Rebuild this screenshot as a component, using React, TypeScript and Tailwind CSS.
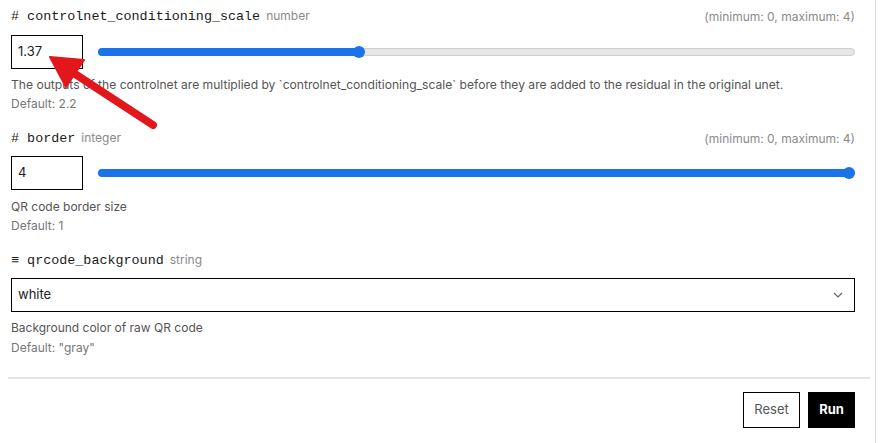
import React from "react";

const mono = { fontFamily: '"Liberation Mono", "DejaVu Sans Mono", monospace' };

function Slider({ pct }: { pct: number }) {
  return (
    <div className="relative flex-1 h-[12px] flex items-center">
      <div className="absolute left-0 right-0 h-[8px] rounded-full bg-[#e6e6e6] border border-[#cfcfcf]" />
      <div className="absolute left-[6px] right-[6px] top-0 bottom-0">
        <div className="absolute -left-[6px] top-[2px] h-[8px] rounded-full bg-[#1a73e8]" style={{ width: `calc(${pct}% + 6px)` }} />
        <div
          className="absolute top-0 w-[12px] h-[12px] rounded-full bg-[#1a73e8] -translate-x-1/2"
          style={{ left: `${pct}%` }}
        />
      </div>
    </div>
  );
}

function Label({ icon, name, type, range }: { icon: string; name: string; type: string; range?: string }) {
  return (
    <div className="flex items-center justify-between h-[20px]">
      <div className="flex items-baseline gap-[6px]">
        <span className="text-[13.4px] text-[#1a1a1a]" style={mono}>
          {icon} {name}
        </span>
        <span className="text-[12px] text-[#8a8a8a]">{type}</span>
      </div>
      {range && <span className="text-[12px] text-[#8a8a8a]">{range}</span>}
    </div>
  );
}

export default function App() {
  return (
    <div className="relative w-[884px] h-[443px] bg-white overflow-hidden" style={{ fontFamily: 'Inter, Roboto, "Liberation Sans", sans-serif' }}>
      <div className="w-[876px] h-full border-r border-[#dcdcdc] pl-[11px] pr-[20px] pt-[7px]">
        {/* field 1 */}
        <Label icon="#" name="controlnet_conditioning_scale" type="number" range="(minimum: 0, maximum: 4)" />
        <div className="flex items-center gap-[15px] mt-[8px]">
          <div className="w-[72px] h-[34px] border border-black flex items-center px-[6px] text-[13px] text-[#222]">1.37</div>
          <Slider pct={34.25} />
        </div>
        <div className="mt-[7px] text-[12.1px] leading-[18px] text-[#555]">
          The outputs of the controlnet are multiplied by `controlnet_conditioning_scale` before they are added to the residual in the original unet.
        </div>
        <div className="mt-[1px] text-[12px] leading-[18px] text-[#777]">Default: 2.2</div>

        {/* field 2 */}
        <div className="mt-[16px]">
          <Label icon="#" name="border" type="integer" range="(minimum: 0, maximum: 4)" />
        </div>
        <div className="flex items-center gap-[15px] mt-[7px]">
          <div className="w-[72px] h-[34px] border border-black flex items-center px-[6px] text-[13px] text-[#222]">4</div>
          <Slider pct={100} />
        </div>
        <div className="mt-[8px] text-[12px] leading-[18px] text-[#555]">QR code border size</div>
        <div className="mt-[1px] text-[12px] leading-[18px] text-[#777]">Default: 1</div>

        {/* field 3 */}
        <div className="mt-[16px]">
          <Label icon="≡" name="qrcode_background" type="string" />
        </div>
        <div className="mt-[7px] h-[34px] border border-black flex items-center justify-between px-[6px] text-[13px] text-[#222]">
          <span>white</span>
          <svg width="12" height="12" viewBox="0 0 12 12" className="mr-[4px]">
            <path d="M2 4 L6 8 L10 4" fill="none" stroke="#666" strokeWidth="1.2" />
          </svg>
        </div>
        <div className="mt-[7px] text-[12px] leading-[18px] text-[#555]">Background color of raw QR code</div>
        <div className="mt-[2px] text-[12px] leading-[18px] text-[#777]">Default: "gray"</div>

        <div className="mt-[20px] -ml-[3px] -mr-[15px] border-t-2 border-[#e4e4e4]" />
        <div className="flex justify-end gap-[8px] mt-[13px]">
          <button className="w-[57px] h-[36px] border border-black text-[13px] text-[#555] bg-white">Reset</button>
          <button className="w-[47px] h-[36px] bg-black text-white text-[13px] font-bold">Run</button>
        </div>
      </div>

      <svg className="absolute left-0 top-0 pointer-events-none" width="884" height="443">
        <line x1="72" y1="72" x2="153" y2="125" stroke="#e3161b" strokeWidth="8" strokeLinecap="round" />
        <polygon points="50,57 84,60 66,87" fill="#e3161b" stroke="#e3161b" strokeWidth="2" strokeLinejoin="round" />
      </svg>
    </div>
  );
}
